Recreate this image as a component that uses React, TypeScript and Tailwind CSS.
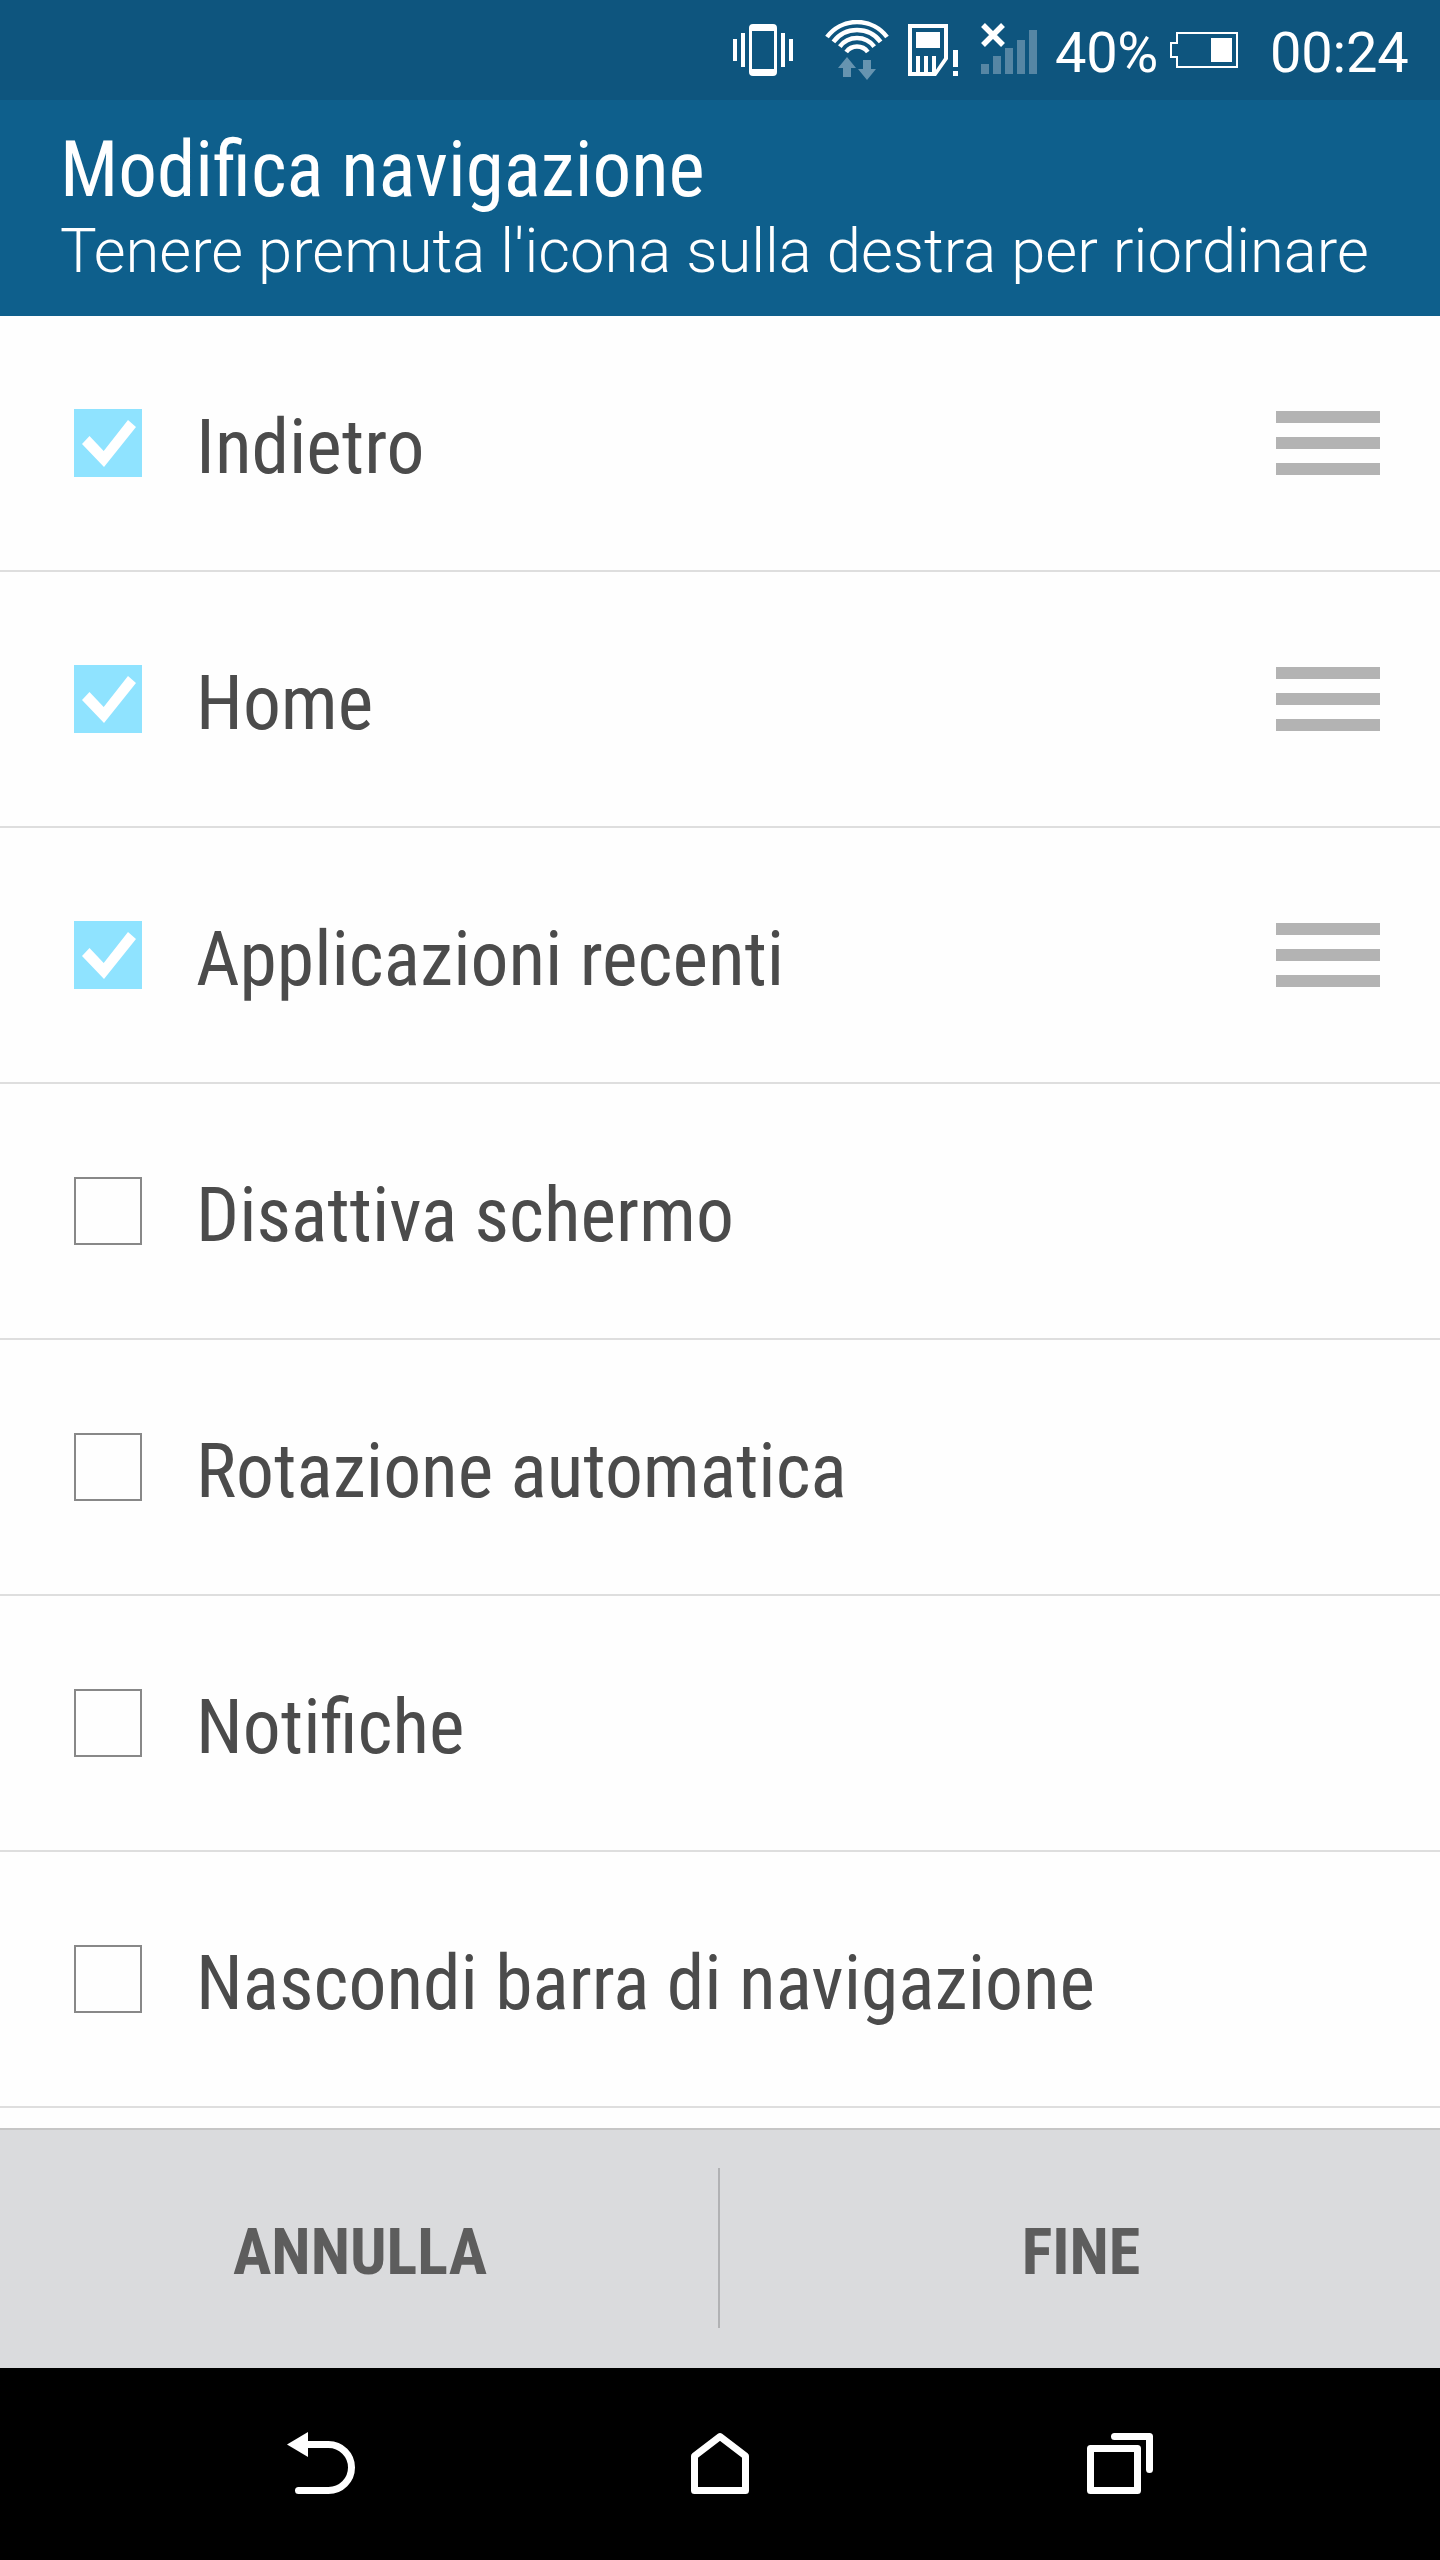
import { useState } from 'react';
import { clsx } from 'clsx';

const initialItems = [
  { id: 'back', label: 'Indietro', checked: true },
  { id: 'home', label: 'Home', checked: true },
  { id: 'recents', label: 'Applicazioni recenti', checked: true },
  { id: 'screen-off', label: 'Disattiva schermo', checked: false },
  { id: 'rotation', label: 'Rotazione automatica', checked: false },
  { id: 'notifications', label: 'Notifiche', checked: false },
  { id: 'hide-bar', label: 'Nascondi barra di navigazione', checked: false },
];

function StatusIcons() {
  return (
    <svg width="310" height="60" viewBox="730 20 310 60" fill="#fff" className="shrink-0">
      {/* vibrate */}
      <path d="M733 39h4v22h-4zM741 33h4v34h-4zM781 33h4v34h-4zM789 39h4v22h-4z" />
      <path
        fillRule="evenodd"
        d="M753 24h20a4 4 0 0 1 4 4v44a4 4 0 0 1-4 4h-20a4 4 0 0 1-4-4V28a4 4 0 0 1 4-4zM752 31v38h22V31z"
      />
      {/* wifi */}
      <g fill="none" stroke="#fff" strokeWidth="4.5">
        <path d="M827 37A37.5 37.5 0 0 1 887 37" />
        <path d="M833.4 41.8A29.5 29.5 0 0 1 880.6 41.8" />
        <path d="M839.8 46.6A21.5 21.5 0 0 1 874.2 46.6" />
        <path d="M846.2 52A13.5 13.5 0 0 1 867.8 52" />
      </g>
      <path fill="#6694b0" d="M847 57l9 11h-5v9h-8v-9h-5zM867 80l-9-11h5v-9h8v9h5z" />
      {/* sim */}
      <path fillRule="evenodd" d="M908 24h40v35l-12 17h-28zM912 28v44h22.500l9.500-14V28z" />
      <path d="M916 32h24v16h-24zM916 56h4v17h-4zM924 56h4v17h-4zM932 56h4v17h-4zM953 50h5v17h-5zM953 71h5v5h-5z" />
      {/* signal */}
      <path
        fill="#5686a4"
        d="M981 64h8v10h-8zM993 56h8v18h-8zM1005 48h8v26h-8zM1017 40h8v34h-8zM1029 30h8v44h-8z"
      />
      <path d="M983 25l20 20M1003 25l-20 20" stroke="#fff" strokeWidth="5.500" />
    </svg>
  );
}

function BatteryIcon() {
  return (
    <svg width="68" height="36" viewBox="0 0 68 36" fill="none" className="shrink-0">
      <path d="M7 1h60v34H7V25H1V11h6z" stroke="#fff" strokeWidth="2" />
      <path d="M41 6h21v24H41z" fill="#fff" />
    </svg>
  );
}

function StatusBar() {
  return (
    <div className="flex h-[100px] items-center bg-[#0e557e] pl-[730px] text-[56px] leading-none text-white">
      <StatusIcons />
      <span className="ml-[15px] w-[102px] pt-[5px] tracking-[-0.3px]">40%</span>
      <span className="ml-[13px]">
        <BatteryIcon />
      </span>
      <span className="ml-8 pt-[5px] tracking-[-0.2px]">00:24</span>
    </div>
  );
}

function Checkbox({ checked }: { checked: boolean }) {
  return (
    <span
      className={clsx(
        'block h-[68px] w-[68px] shrink-0',
        checked ? 'bg-[#8fe3ff]' : 'border-2 border-[#888]',
      )}
    >
      {checked && (
        <svg width="68" height="68" viewBox="0 0 68 68" fill="#fff">
          <path d="M8 35l7.500-8L29.700 42 54 11l8 7L30 58z" />
        </svg>
      )}
    </span>
  );
}

function DragHandle() {
  return (
    <span className="mr-[60px] ml-auto flex w-[104px] flex-col gap-[14px]">
      <span className="h-3 bg-[#b3b3b3]" />
      <span className="h-3 bg-[#b3b3b3]" />
      <span className="h-3 bg-[#b3b3b3]" />
    </span>
  );
}

export default function App() {
  const [items, setItems] = useState(initialItems);

  const toggle = (id: string) => {
    setItems(items.map((item) => (item.id === id ? { ...item, checked: !item.checked } : item)));
  };

  return (
    <div className="flex h-[2560px] w-[1440px] flex-col overflow-hidden bg-[#fefefe] font-[Roboto,sans-serif]">
      <StatusBar />
      <header className="h-[216px] bg-[#0e5f8c] pt-[26px] pl-[60px] whitespace-nowrap text-white">
        <h1 className="font-['Roboto_Condensed',Roboto,sans-serif] text-[77.2px] leading-[88px]">
          Modifica navigazione
        </h1>
        <p className="text-[61.5px] leading-[74px] font-light">
          Tenere premuta l'icona sulla destra per riordinare
        </p>
      </header>

      <ul className="h-[1812px]">
        {items.map((item) => (
          <li
            key={item.id}
            onClick={() => toggle(item.id)}
            className="flex h-64 items-center border-b-2 border-[#dedede] pl-[74px]"
          >
            <Checkbox checked={item.checked} />
            <span className="ml-[54px] pt-2 font-['Roboto_Condensed',Roboto,sans-serif] text-[75.6px] leading-[88px] whitespace-nowrap text-[#4b4b4b]">
              {item.label}
            </span>
            {item.checked && <DragHandle />}
          </li>
        ))}
      </ul>

      <footer className="flex h-60 items-center border-t-2 border-[#c6c6c6] bg-[#dadbdd] font-['Roboto_Condensed',Roboto,sans-serif] text-[64.2px] font-bold text-[#5d5d5d]">
        <button className="-mt-0.5 h-40 w-[720px] border-r-2 border-[#b1b2b4] pt-2 pl-0.5">ANNULLA</button>
        <button className="-mt-0.5 h-40 w-[720px] pt-2 pl-0.5">FINE</button>
      </footer>

      <nav className="flex h-48 items-center bg-black pl-[287px]">
        <svg width="68" height="64" viewBox="287 2432 68 64" fill="none">
          <path d="M287 2444.500l21-12.500v25z" fill="#fff" />
          <path
            d="M306 2444.500h22.500a23 23 0 0 1 0 46H298.500"
            stroke="#fff"
            strokeWidth="7"
            strokeLinecap="round"
          />
        </svg>
        <svg width="58" height="64" viewBox="691 2432 58 64" fill="none" className="ml-[336px]">
          <path
            d="M694.500 2490.500V2456L720 2436.500l25.500 19.500v34.500z"
            stroke="#fff"
            strokeWidth="7"
            strokeLinejoin="round"
          />
        </svg>
        <svg
          width="66"
          height="64"
          viewBox="1087 2432 66 64"
          fill="none"
          stroke="#fff"
          strokeWidth="7"
          strokeLinecap="round"
          strokeLinejoin="round"
          className="ml-[338px]"
        >
          <path d="M1090.500 2448.500h47v42h-47zM1114.500 2436.500h35v33" />
        </svg>
      </nav>
    </div>
  );
}
